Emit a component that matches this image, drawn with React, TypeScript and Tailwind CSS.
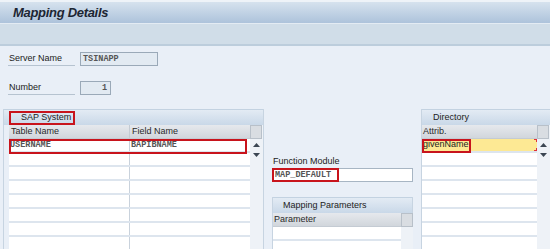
import { ReactNode } from "react"

const sans = "font-['Liberation_Sans',Arial,sans-serif]"
const mono = "font-['Liberation_Mono','Courier_New',monospace]"

function ScrollArrows() {
  return (
    <div className="flex flex-col items-center pt-[4px] gap-[6px]">
      <svg width="7" height="4" viewBox="0 0 7 4">
        <path d="M0 4 L3.5 0 L7 4 Z" fill="#3b4652" />
      </svg>
      <svg width="7" height="4" viewBox="0 0 7 4">
        <path d="M0 0 L3.5 4 L7 0 Z" fill="#3b4652" />
      </svg>
    </div>
  )
}

function PanelHeader({ children }: { children: ReactNode }) {
  return (
    <div className="h-[16px] shrink-0 flex items-center border-t border-[#c3d2e1] bg-gradient-to-b from-[#e3ebf4] to-[#c9d8e8]">
      {children}
    </div>
  )
}

function ColHeader({ children }: { children: ReactNode }) {
  return (
    <div className="h-[14px] flex items-center bg-gradient-to-b from-[#e6e9ed] to-[#d1d6dc] border-b border-[#c4cbd3] text-[9px] text-[#2a2a2a]">
      {children}
    </div>
  )
}

function ScrollHead() {
  return <div className="w-[12px] h-[14px] bg-[#d9dde2] border border-[#b8c0c9]" />
}

function EmptyRows({ count, cols }: { count: number; cols: number[] }) {
  return (
    <>
      {Array.from({ length: count }).map((_, i) => (
        <div key={i} className="h-[14px] flex bg-white border-b-2 border-[#dde5ee]">
          {cols.map((w, j) => (
            <div key={j} style={{ width: w }} className={j < cols.length - 1 ? "border-r border-[#c9d2dc]" : ""} />
          ))}
        </div>
      ))}
    </>
  )
}

export default function App() {
  return (
    <div className={`w-[550px] h-[249px] overflow-hidden flex flex-col bg-[#e9eff7] ${sans}`}>
      {/* title */}
      <div className="h-[23px] shrink-0 flex items-center pl-[13px] border-t-2 border-[#eef3f8] bg-gradient-to-b from-[#d6e2ee] to-[#adc3db]">
        <span className="text-[13px] font-bold italic text-[#1d2633] tracking-[-0.3px]">Mapping Details</span>
      </div>
      {/* toolbar */}
      <div className="h-[23px] shrink-0 bg-[#d0dde8] border-t border-[#e3ebf3] border-b-2 border-b-[#bccddc]" />

      {/* form */}
      <div className="shrink-0 flex items-center mt-[6px] h-[14px]">
        <div className="ml-[8px] w-[67px] h-[14px] flex items-center pl-[1px] border-b border-[#b6c3d0] text-[9px] text-[#222]">
          Server Name
        </div>
        <div className={`ml-[5px] w-[78px] h-[14px] flex items-center pl-[2px] bg-[#e2eaf2] border border-[#9aa9b8] text-[8.5px] font-bold text-[#555] ${mono}`}>
          TSINAPP
        </div>
      </div>
      <div className="shrink-0 flex items-center mt-[15px] h-[14px]">
        <div className="ml-[8px] w-[67px] h-[14px] flex items-center pl-[1px] border-b border-[#b6c3d0] text-[9px] text-[#222]">
          Number
        </div>
        <div className={`ml-[5px] w-[31px] h-[14px] flex items-center justify-end pr-[3px] bg-[#e2eaf2] border border-[#9aa9b8] text-[8.5px] font-bold text-[#555] ${mono}`}>
          1
        </div>
      </div>

      {/* lower area */}
      <div className="flex items-start mt-[14px] flex-1 min-h-0 overflow-hidden">
        {/* SAP System */}
        <div className="ml-[3px] w-[261px] h-full border-l border-r border-[#c7d4e1] flex flex-col">
          <PanelHeader>
            <div className="ml-[5px] h-[14px] w-[66px] flex items-center pl-[10px] border-2 border-[#c8141c] text-[9px] text-[#222]">
              SAP System
            </div>
          </PanelHeader>
          <div className="flex pl-[5px]">
            <div className="w-[241px] flex flex-col">
              <ColHeader>
                <div className="w-[121px] pl-[2px] border-r border-[#c4cbd3] h-full flex items-center">Table Name</div>
                <div className="pl-[2px]">Field Name</div>
              </ColHeader>
              <div className={`relative h-[14px] flex bg-white border-b-2 border-[#dde5ee] text-[8.5px] font-bold text-[#555] ${mono}`}>
                <div className="w-[121px] pl-[1px] border-r border-[#c9d2dc] flex items-center">USERNAME</div>
                <div className="pl-[1px] flex items-center">BAPIBNAME</div>
                <div className="absolute left-0 top-0 w-[238px] h-[15px] border-2 border-[#c8141c]" />
              </div>
              <EmptyRows count={7} cols={[121, 120]} />
            </div>
            <div className="w-[13px] flex flex-col bg-[#eef2f7] h-[130px]">
              <ScrollHead />
              <ScrollArrows />
            </div>
          </div>
        </div>

        {/* middle */}
        <div className="ml-[8px] w-[141px] h-full flex flex-col">
          <div className="mt-[46px] text-[9px] text-[#222] h-[13px] pl-[1px] shrink-0">Function Module</div>
          <div className={`relative shrink-0 h-[14px] flex items-center pl-[2px] bg-white border border-[#a7b5c3] text-[8.5px] font-bold text-[#555] ${mono}`}>
            MAP_DEFAULT
            <div className="absolute -left-px -top-px w-[67px] h-[14px] border-2 border-[#c8141c]" />
          </div>
          <div className="mt-[15px] flex-1 border-l border-r border-[#c7d4e1] flex flex-col">
            <PanelHeader>
              <span className="ml-[10px] text-[9px] text-[#222]">Mapping Parameters</span>
            </PanelHeader>
            <div className="flex">
              <div className="w-[128px] flex flex-col">
                <ColHeader>
                  <div className="pl-[1px]">Parameter</div>
                </ColHeader>
                <EmptyRows count={2} cols={[128]} />
              </div>
              <div className="w-[12px] flex flex-col bg-[#eef2f7]">
                <ScrollHead />
              </div>
            </div>
          </div>
        </div>

        {/* Directory */}
        <div className="ml-[8px] w-[130px] h-full border-l border-[#c7d4e1] flex flex-col">
          <PanelHeader>
            <span className="ml-[11px] text-[9px] text-[#222]">Directory</span>
          </PanelHeader>
          <div className="flex">
            <div className="w-[115px] flex flex-col">
              <ColHeader>
                <div className="pl-[1px]">Attrib.</div>
              </ColHeader>
              <div className="relative h-[14px] flex items-center bg-[#fde994] border-b-2 border-[#dde5ee] text-[9px] text-[#222]">
                <span className="pl-[1px]">givenName</span>
                <div className="absolute left-0 top-0 w-[49px] h-[14px] border-2 border-[#c8141c]" />
                <div className="absolute right-0 top-0 w-[3px] h-[3px] border-t border-r border-[#e0303a]" />
                <div className="absolute right-0 bottom-0 w-[3px] h-[3px] border-b border-r border-[#e0303a]" />
              </div>
              <EmptyRows count={7} cols={[115]} />
            </div>
            <div className="w-[13px] flex flex-col items-start bg-[#eef2f7] h-[130px]">
              <ScrollHead />
              <div className="w-[12px] flex justify-center">
                <ScrollArrows />
              </div>
            </div>
          </div>
        </div>
      </div>
    </div>
  )
}
